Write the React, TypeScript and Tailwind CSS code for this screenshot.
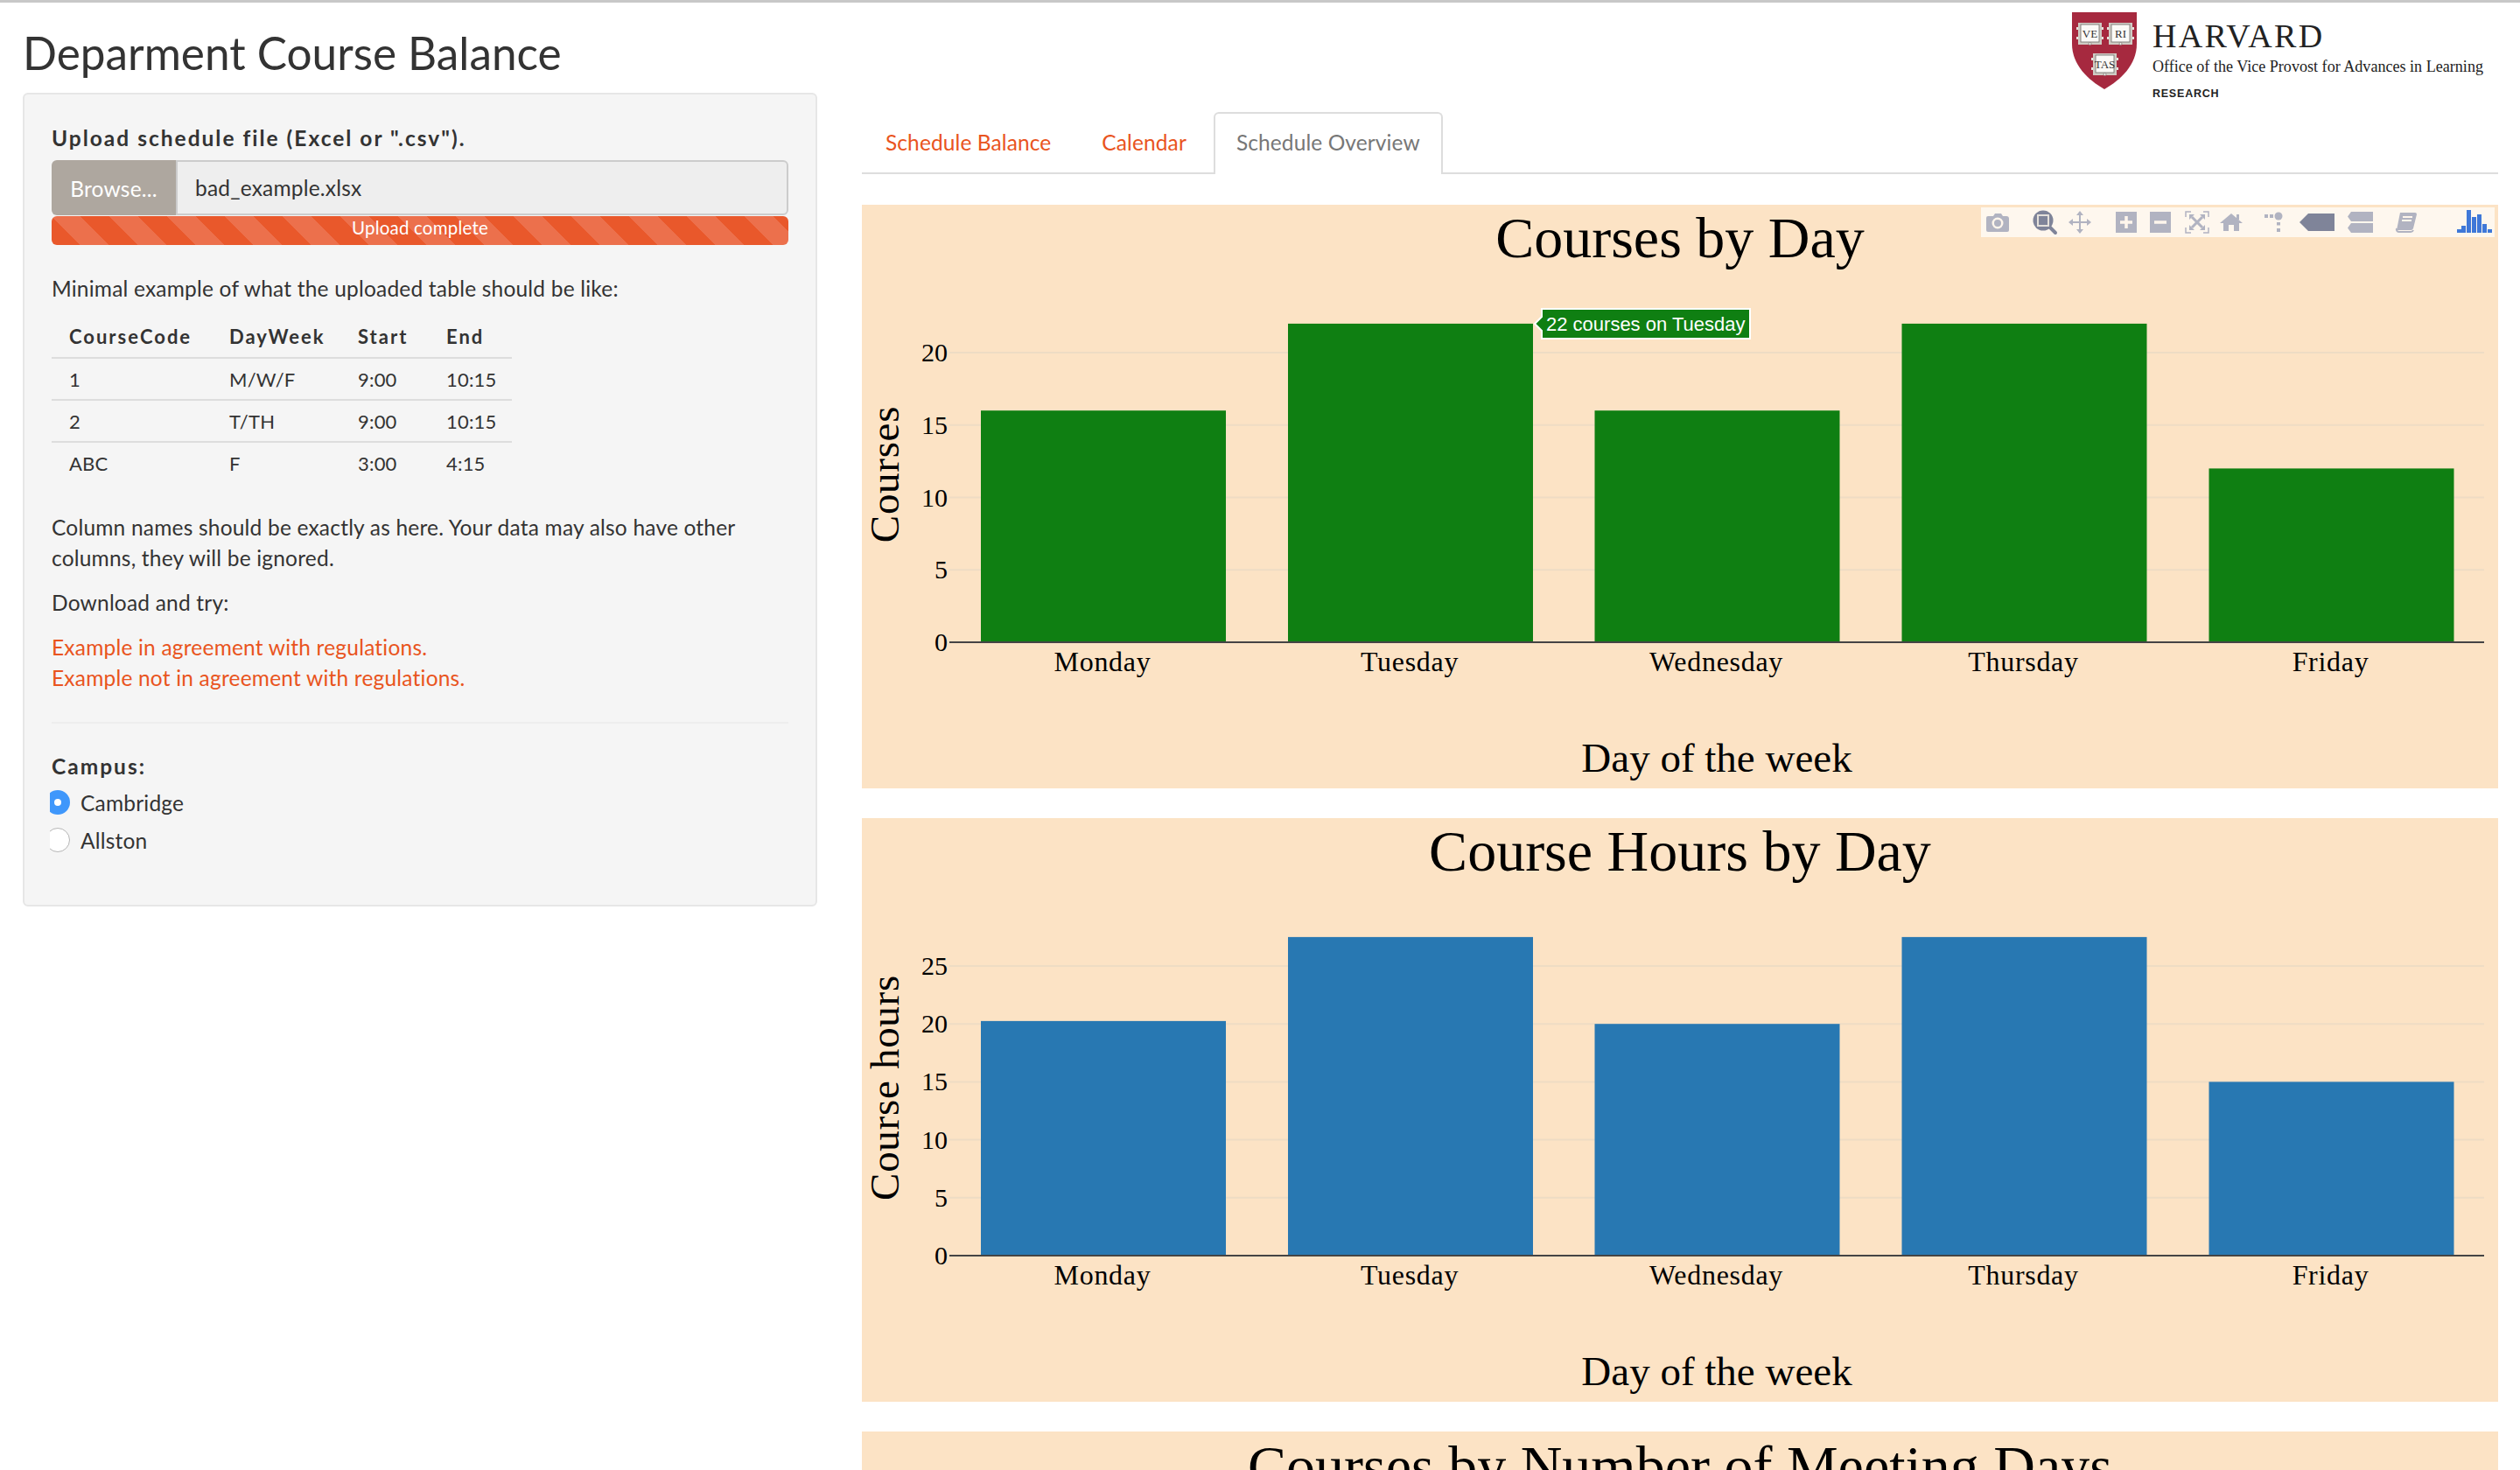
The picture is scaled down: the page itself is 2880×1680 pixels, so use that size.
import type { ReactNode } from 'react';

const days = ['Monday', 'Tuesday', 'Wednesday', 'Thursday', 'Friday'];
const barX = [136, 487, 837.5, 1188.5, 1539.5];

type ChartProps = {
  title: string;
  yLabel: string;
  color: string;
  values: number[];
  ticks: number[];
  perUnit: number;
  tooltip?: boolean;
};

function IconSlot({ w = 30, className, children }: { w?: number; className: string; children: ReactNode }) {
  return (
    <svg viewBox={`0 0 ${w} 30`} width={w} height={30} className={className}>
      {children}
    </svg>
  );
}

function ModeBar() {
  const c = '#b1b3c1';
  return (
    <div className="absolute right-[4px] top-[3px] flex h-[34px] w-[587px] items-center bg-white/70">
      <IconSlot className="ml-[4px] shrink-0">
        <path fill={c} d="M4 8h6l2-3h7l2 3h4a3 3 0 0 1 3 3v13a2 2 0 0 1-2 2H4a2 2 0 0 1-2-2V10a2 2 0 0 1 2-2z" />
        <circle cx="15" cy="16" r="6.5" fill="#fff6ec" />
        <circle cx="15" cy="16" r="4" fill={c} />
      </IconSlot>
      <IconSlot className="ml-[24px] shrink-0">
        <path stroke="#7f8499" strokeWidth="4" strokeLinecap="round" d="M20 20l7 7" />
        <circle cx="13" cy="13" r="11.5" fill="#7f8499" />
        <rect x="7" y="7" width="12" height="12" fill="#7f8499" stroke="#e4e0da" strokeWidth="2" />
      </IconSlot>
      <IconSlot className="ml-[10px] shrink-0">
        <path
          fill={c}
          d="M15 2l4 5h-3v7h7v-3l5 4-5 4v-3h-7v7h3l-4 5-4-5h3v-7H7v3l-5-4 5-4v3h7V7h-3z"
        />
      </IconSlot>
      <IconSlot className="ml-[23px] shrink-0">
        <rect x="3" y="3" width="24" height="24" fill={c} />
        <path stroke="#fff6ec" strokeWidth="3.5" d="M15 8v14M8 15h14" />
      </IconSlot>
      <IconSlot className="ml-[9px] shrink-0">
        <rect x="3" y="3" width="24" height="24" fill={c} />
        <path stroke="#fff6ec" strokeWidth="3.5" d="M8 15h14" />
      </IconSlot>
      <IconSlot className="ml-[12px] shrink-0">
        <path fill="none" stroke={c} strokeWidth="1.5" d="M8 3H2v6M22 3h6v6M8 27H2v-6M22 27h6v-6" />
        <path stroke={c} strokeWidth="3" d="M9 9l12 12M21 9L9 21" />
        <path fill={c} d="M6 6h6l-6 6zM24 6v6l-6-6zM6 24v-6l6 6zM24 24h-6l6-6z" />
      </IconSlot>
      <IconSlot className="ml-[9px] shrink-0">
        <path fill={c} d="M15 5l13 11h-4v9h-6v-7h-6v7H6v-9H2z" />
        <rect x="21" y="6" width="3" height="6" fill={c} />
      </IconSlot>
      <IconSlot className="ml-[19px] shrink-0">
        <rect x="4" y="6" width="4" height="4" fill={c} />
        <rect x="10" y="6" width="4" height="4" fill={c} />
        <circle cx="20" cy="8" r="4.5" fill={c} />
        <rect x="18" y="15" width="4" height="3.5" fill={c} />
        <rect x="18" y="22" width="4" height="4" fill={c} />
      </IconSlot>
      <IconSlot w={44} className="ml-[12px] shrink-0">
        <path fill="#7f8499" d="M2 15L12 5h30v20H12z" />
      </IconSlot>
      <IconSlot className="ml-[12px] shrink-0">
        <path fill={c} d="M5 3h25v11H5L1 8.5zM5 16h25v11H5l-4-5.5z" />
      </IconSlot>
      <IconSlot className="ml-[23px] shrink-0">
        <path fill={c} d="M8 4h17a2 2 0 0 1 2 2l-4 16a3 3 0 0 1-3 2H7l-3 0z" />
        <path fill="none" stroke={c} strokeWidth="2" d="M4 22a3 3 0 0 0 3 4h13a3 3 0 0 0 3-2" />
        <path stroke="#fff6ec" strokeWidth="2" d="M11 9h11M10 13h11" />
      </IconSlot>
      <svg viewBox="0 0 44 30" width={44} height={30} className="ml-[41px] shrink-0">
        <g fill="#3f78d8">
          <rect x="2" y="23" width="5" height="4" />
          <rect x="7" y="19" width="5" height="8" />
          <rect x="13" y="1" width="5" height="26" />
          <rect x="19" y="9" width="5" height="18" />
          <rect x="25" y="6" width="5" height="21" />
          <rect x="31" y="17" width="5" height="10" />
          <rect x="37" y="23" width="5" height="4" />
        </g>
      </svg>
    </div>
  );
}

function BarChart({ title, yLabel, color, values, ticks, perUnit, tooltip }: ChartProps) {
  const base = 500;
  return (
    <div className="relative mb-[34px] h-[667px] w-[1870px] shrink-0 bg-[#fce3c5]">
      <svg viewBox="0 0 1870 667" width={1870} height={667} className="block font-['Liberation_Serif',serif]">
        <text x="935" y="60" textAnchor="middle" fontSize="66">
          {title}
        </text>
        {ticks.map((t) => (
          <g key={t}>
            {t > 0 && <line x1="100" x2="1854" y1={base - t * perUnit} y2={base - t * perUnit} stroke="#eedcc4" strokeWidth="2" />}
            <text x="98" y={base - t * perUnit + 10} textAnchor="end" fontSize="30">
              {t}
            </text>
          </g>
        ))}
        {values.map((v, i) => (
          <rect key={days[i]} x={barX[i]} y={base - v * perUnit} width="280" height={v * perUnit} fill={color} />
        ))}
        <line x1="100" x2="1854" y1={base} y2={base} stroke="#444" strokeWidth="2" />
        {days.map((d, i) => (
          <text key={d} x={barX[i] + 139} y="533" textAnchor="middle" fontSize="32" letterSpacing="0.7">
            {d}
          </text>
        ))}
        <text x="977" y="648" textAnchor="middle" fontSize="47">
          Day of the week
        </text>
        <text transform={`translate(42 ${base - 192}) rotate(-90)`} textAnchor="middle" fontSize="47" letterSpacing="0.7">
          {yLabel}
        </text>
        {tooltip && (
          <g>
            <path d="M777 119h238v34H777v-9l-8-8 8-8z" fill="#0f7f12" stroke="#fff" strokeWidth="2" />
            <text x="782" y="144" fontSize="22" fill="#fff" className="font-['Liberation_Sans',sans-serif]">
              22 courses on Tuesday
            </text>
          </g>
        )}
      </svg>
      {tooltip && <ModeBar />}
    </div>
  );
}

function ShieldBook({ x, y, text }: { x: number; y: number; text: string }) {
  return (
    <g>
      <rect x={x} y={y + 5} width="3" height="3" fill="#e8e4de" />
      <rect x={x} y={y + 16} width="3" height="3" fill="#e8e4de" />
      <rect x={x + 28} y={y + 5} width="3" height="3" fill="#e8e4de" />
      <rect x={x + 28} y={y + 16} width="3" height="3" fill="#e8e4de" />
      <rect x={x + 2} y={y} width="27" height="25" fill="#cfcbc4" />
      <rect x={x + 5} y={y + 2} width="21" height="20" fill="#fbfaf7" stroke="#6f6a66" strokeWidth="0.8" />
      <circle cx={x + 15.5} cy={y + 24} r="1.5" fill="#f4f1ec" stroke="#6f6a66" strokeWidth="0.6" />
      <text x={x + 15.5} y={y + 17} textAnchor="middle" fontSize="13" fill="#333" className="font-['Liberation_Serif',serif]">
        {text}
      </text>
    </g>
  );
}

function HarvardLogo() {
  return (
    <div className="mr-[42px] mt-[11px] flex items-start">
      <svg viewBox="0 0 74 88" width={74} height={88} className="shrink-0">
        <path d="M0 0h74v36c0 24-18 41-37 52C18 77 0 60 0 36z" fill="#a6293f" />
        <ShieldBook x={5} y={12} text="VE" />
        <ShieldBook x={40} y={12} text="RI" />
        <ShieldBook x={22} y={47} text="TAS" />
      </svg>
      <div className="ml-[18px] font-['Liberation_Serif',serif] text-[#222]">
        <div className="mt-[7px] text-[38px] leading-[40px] tracking-[2.400px]">HARVARD</div>
        <div className="mt-[3px] text-[18.100px] leading-[24px]">Office of the Vice Provost for Advances in Learning</div>
        <div className="mt-[12px] font-['Liberation_Sans',sans-serif] text-[12.500px] font-bold leading-[15px] tracking-[0.8px]">RESEARCH</div>
      </div>
    </div>
  );
}

function Radio({ checked }: { checked?: boolean }) {
  // the browser clips the left edge of these in the original page
  return (
    <span className="-ml-[2px] h-[28px] w-[23px] shrink-0 overflow-hidden">
      {checked ? (
        <span className="-ml-[5px] flex h-[28px] w-[28px] items-center justify-center rounded-full bg-[#3f97fb]">
          <span className="h-[8px] w-[8px] rounded-full bg-white" />
        </span>
      ) : (
        <span className="-ml-[5px] block h-[28px] w-[28px] rounded-full border border-[#b5b5b5] bg-white" />
      )}
    </span>
  );
}

function Sidebar() {
  return (
    <aside className="h-[930px] w-[908px] shrink-0 rounded-[6px] border-2 border-[#e6e6e6] bg-[#f5f5f5] pl-[31px] pr-[31px] pt-[32px] text-[24.500px] leading-[35px] tracking-[0.2px] text-[#333]">
      <div className="font-bold leading-[36px] tracking-[2px]">Upload schedule file (Excel or ".csv").</div>
      <div className="mt-[7px] flex h-[63px]">
        <div className="flex w-[142px] items-center justify-center rounded-l-[6px] bg-[#aea79f] pt-[1px] text-white">Browse...</div>
        <div className="flex grow items-center rounded-r-[6px] border-2 border-[#cccccc] bg-[#eeeeee] pl-[20px]">bad_example.xlsx</div>
      </div>
      <div className="mt-[1px] flex h-[33px] items-center justify-center rounded-[6px] bg-[#e9582b] bg-[linear-gradient(45deg,#ec704c_25%,transparent_25%,transparent_50%,#ec704c_50%,#ec704c_75%,transparent_75%,transparent)] bg-[size:66px_66px] pb-[7px] text-[20.500px] leading-[25px] text-white">
        Upload complete
      </div>
      <p className="mt-[32px]">Minimal example of what the uploaded table should be like:</p>
      <table className="mt-[13px] w-[526px] table-fixed border-collapse text-[22px]">
        <colgroup>
          <col className="w-[182px]" />
          <col className="w-[147px]" />
          <col className="w-[101px]" />
          <col className="w-[96px]" />
        </colgroup>
        <thead>
          <tr className="h-[49px] border-b-2 border-[#dddddd] text-left font-bold tracking-[2px]">
            <th className="pl-[20px]">CourseCode</th>
            <th className="pl-[21px]">DayWeek</th>
            <th className="pl-[21px]">Start</th>
            <th className="pl-[21px]">End</th>
          </tr>
        </thead>
        <tbody>
          {[
            ['1', 'M/W/F', '9:00', '10:15'],
            ['2', 'T/TH', '9:00', '10:15'],
            ['ABC', 'F', '3:00', '4:15'],
          ].map((r, i) => (
            <tr key={r[0]} className={i < 2 ? 'h-[48px] border-b-2 border-[#dddddd]' : 'h-[48px]'}>
              <td className="pl-[20px]">{r[0]}</td>
              <td className="pl-[21px]">{r[1]}</td>
              <td className="pl-[21px]">{r[2]}</td>
              <td className="pl-[21px]">{r[3]}</td>
            </tr>
          ))}
        </tbody>
      </table>
      <p className="mt-[32px]">
        Column names should be exactly as here. Your data may also have other
        <br />
        columns, they will be ignored.
      </p>
      <p className="mt-[16px]">Download and try:</p>
      <div className="mt-[16px] text-[#e95420]">
        <a className="block">Example in agreement with regulations.</a>
        <a className="block">Example not in agreement with regulations.</a>
      </div>
      <div className="mt-[33px] h-[2px] bg-[#eeeeee]" />
      <div className="mt-[31px] font-bold tracking-[2px]">Campus:</div>
      <label className="mt-[6px] flex h-[36px] items-center">
        <Radio checked />
        <span className="ml-[12px]">Cambridge</span>
      </label>
      <label className="mt-[7px] flex h-[36px] items-center">
        <Radio />
        <span className="ml-[12px]">Allston</span>
      </label>
    </aside>
  );
}

export default function App() {
  return (
    <div className="h-[1680px] w-[2880px] overflow-hidden border-t-[3px] border-[#c8c8c8] bg-white font-['Lato',sans-serif]">
      <header className="flex h-[103px] items-start justify-between">
        <h1 className="ml-[26px] mt-[30px] text-[51.300px] leading-[55px] text-[#333]">Deparment Course Balance</h1>
        <HarvardLogo />
      </header>
      <main className="flex">
        <div className="ml-[26px]">
          <Sidebar />
        </div>
        <section className="ml-[51px] flex w-[1870px] flex-col">
          <nav className="mt-[22px] flex h-[71px] border-b-2 border-[#dddddd] text-[24.500px] tracking-[0.1px]">
            <a className="ml-[27px] mt-[17px] leading-[35px] text-[#e95420]">Schedule Balance</a>
            <a className="ml-[58px] mt-[17px] leading-[35px] text-[#e95420]">Calendar</a>
            <a className="z-10 -mb-[2px] ml-[31px] w-[262px] rounded-t-[6px] border-2 border-b-0 border-[#dddddd] bg-white pl-[24px] pt-[15px] leading-[35px] text-[#777777]">
              Schedule Overview
            </a>
          </nav>
          <div className="mt-[35px]">
            <BarChart
              title="Courses by Day"
              yLabel="Courses"
              color="#0f7f12"
              values={[16, 22, 16, 22, 12]}
              ticks={[0, 5, 10, 15, 20]}
              perUnit={16.55}
              tooltip
            />
            <BarChart
              title="Course Hours by Day"
              yLabel="Course hours"
              color="#2878b2"
              values={[20.25, 27.5, 20, 27.5, 15]}
              ticks={[0, 5, 10, 15, 20, 25]}
              perUnit={13.24}
            />
            <div className="flex h-[100px] w-[1870px] justify-center bg-[#fce3c5] pt-[2px] font-['Liberation_Serif',serif] text-[66px] leading-[76px]">
              Courses by Number of Meeting Days
            </div>
          </div>
        </section>
      </main>
    </div>
  );
}
